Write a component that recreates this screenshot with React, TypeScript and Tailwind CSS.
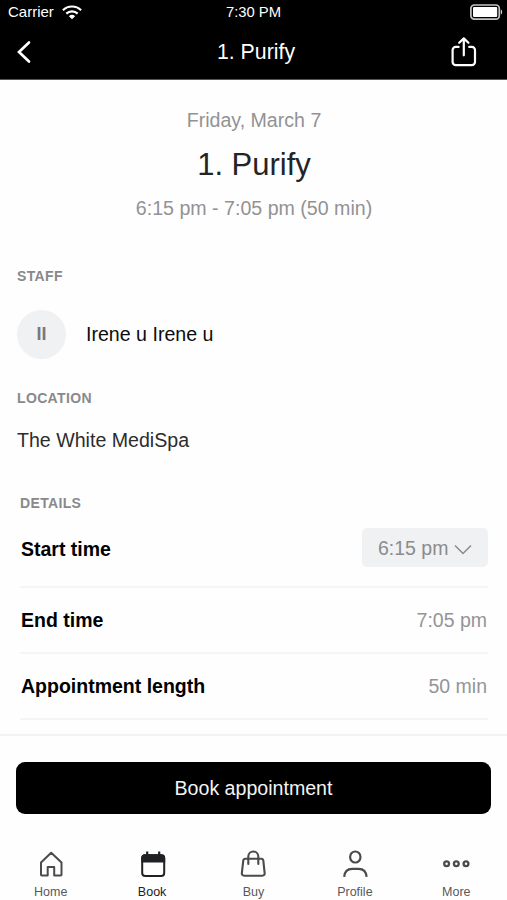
import React from "react";

const DETAILS = [
  { label: "End time", value: "7:05 pm" },
  { label: "Appointment length", value: "50 min" },
];

function WifiIcon() {
  return (
    <svg width="20" height="15" viewBox="0 0 20 15" fill="none" stroke="#fff" strokeWidth="2.2">
      <path d="M0.9 5.2a13 13 0 0 1 18.2 0" />
      <path d="M4.3 8.6a8.2 8.2 0 0 1 11.4 0" />
      <path d="M10 14.3 6.9 11.3a4.5 4.5 0 0 1 6.2 0z" fill="#fff" stroke="none" />
    </svg>
  );
}

function BatteryIcon() {
  return (
    <svg width="33" height="17" viewBox="0 0 33 17" fill="none">
      <rect x="0.9" y="1" width="28.4" height="14.2" rx="3.4" stroke="#c4c4c4" strokeWidth="1.7" />
      <rect x="3" y="3.1" width="24.2" height="10" rx="1" fill="#fff" />
      <path d="M30.8 5.6c1.8.6 1.8 4.4 0 5z" fill="#d4d4d4" />
    </svg>
  );
}

function ShareIcon() {
  return (
    <svg width="26" height="30" viewBox="0 0 26 30" fill="none" stroke="#fff" strokeWidth="2.2" strokeLinecap="round" strokeLinejoin="round">
      <path d="M7.6 9.9H4.8a3.2 3.2 0 0 0-3.2 3.2v11.9a3.2 3.2 0 0 0 3.2 3.2h16a3.2 3.2 0 0 0 3.2-3.2V13.1a3.2 3.2 0 0 0-3.2-3.2h-2.6" />
      <path d="M12.8 18.3V1.6M8.2 5.8l4.6-4.4 4.6 4.4" />
    </svg>
  );
}

const HomeIcon = () => (
  <svg width="28" height="28" viewBox="0 0 28 28" fill="none" stroke="#4b4b4d" strokeWidth="2" strokeLinejoin="round">
    <path d="M14.2 2.8 4 12.5v12.2q0 .8.8.8h5.9v-8.4h6.500v8.400h6.500q.8 0 .8-.8V12.500z" />
  </svg>
);

const BookIcon = () => (
  <svg width="28" height="28" viewBox="0 0 28 28" fill="none">
    <rect x="4.2" y="5.2" width="22" height="20.7" rx="3" stroke="#202124" strokeWidth="2" />
    <path d="M3.2 12.500V8q0-3.800 3.800-3.800h16.400q3.800 0 3.800 3.800v4.500z" fill="#202124" />
    <path d="M9.2 1.600v4M21.200 1.600v4" stroke="#202124" strokeWidth="2.2" />
  </svg>
);

const BuyIcon = () => (
  <svg width="28" height="28" viewBox="0 0 28 28" fill="none" stroke="#4b4b4d" strokeWidth="2.1" strokeLinecap="round">
    <path d="M6.300 8.700h16q1.700 0 2 1.800l1.300 12.200q.4 3-2.400 3H5.300q-2.800 0-2.400-3l1.400-12.200q.3-1.800 2-1.800z" />
    <path d="M9.300 14V6.500a5 5 0 0 1 10 0V14" />
  </svg>
);

const ProfileIcon = () => (
  <svg width="28" height="28" viewBox="0 0 28 28" fill="none" stroke="#4b4b4d" strokeWidth="2.2">
    <ellipse cx="14.3" cy="7" rx="5.2" ry="5.500" />
    <path d="M3.200 26.800q.6-8 8-8h6.400q7.400 0 8 8" />
  </svg>
);

const MoreIcon = () => (
  <svg width="28" height="28" viewBox="0 0 28 28" fill="none" stroke="#4b4b4d" strokeWidth="2.3">
    <circle cx="4.6" cy="13.800" r="2.4" />
    <circle cx="14.3" cy="13.800" r="2.4" />
    <circle cx="24" cy="13.800" r="2.4" />
  </svg>
);

const TABS = [
  { label: "Home", icon: <HomeIcon /> },
  { label: "Book", icon: <BookIcon />, active: true },
  { label: "Buy", icon: <BuyIcon /> },
  { label: "Profile", icon: <ProfileIcon /> },
  { label: "More", icon: <MoreIcon /> },
];

function SectionTitle({ children }: { children: React.ReactNode }) {
  return <h2 className="text-[14px] leading-5 font-bold tracking-[0.35px] text-[#89898b]">{children}</h2>;
}

export default function App() {
  return (
    <div className="flex h-[900px] w-[507px] flex-col overflow-hidden bg-[#fefefe] font-['Liberation_Sans',sans-serif]">
      <header className="h-20 shrink-0 border-b border-[#555] bg-black text-white">
        <div className="grid h-6 grid-cols-3 items-center pr-1 pl-2 text-[15px] leading-6">
          <div className="flex items-center gap-2">
            <span>Carrier</span>
            <WifiIcon />
          </div>
          <span className="pr-1 text-center text-[14.8px]">7:30 PM</span>
          <div className="flex justify-end"><BatteryIcon /></div>
        </div>
        <div className="grid h-[55px] grid-cols-3 items-center pr-[30px] pl-4">
          <button aria-label="Back">
            <svg width="16" height="24" viewBox="0 0 16 24" fill="none" stroke="#fff" strokeWidth="2.7" strokeLinecap="round">
              <path d="M13 2.5 3 12l10 9.5" />
            </svg>
          </button>
          <h1 className="pl-[19px] text-center text-[21.3px] leading-6">1. Purify</h1>
          <button aria-label="Share" className="flex justify-end"><ShareIcon /></button>
        </div>
      </header>

      <main className="h-[656px] shrink-0 border-b-2 border-[#f3f3f4] px-[17px]">
        <div className="flex flex-col items-center pt-7 pl-px text-[19.6px] leading-6 text-[#929294]">
          <p>Friday, March 7</p>
          <p className="mt-[13px] text-[31px] leading-10 text-[#242426]">1. Purify</p>
          <p className="mt-[11px]">6:15 pm - 7:05 pm (50 min)</p>
        </div>

        <section className="mt-[46px]">
          <SectionTitle>STAFF</SectionTitle>
          <div className="mt-6 flex items-center gap-5">
            <span className="flex size-[49px] items-center justify-center rounded-full bg-[#f0f1f3] text-[18px] font-bold text-[#77787c]">II</span>
            <span className="pb-px text-[19.6px] leading-6 text-[#0c0c0c]">Irene u Irene u</span>
          </div>
        </section>

        <section className="mt-[29px]">
          <SectionTitle>LOCATION</SectionTitle>
          <p className="mt-5 text-[19.6px] leading-6 text-[#2c2c2e]">The White MediSpa</p>
        </section>

        <section className="mt-[41px] pr-[2px] pl-[3px]">
          <SectionTitle>DETAILS</SectionTitle>
          <div className="mt-[15px] flex h-[60px] items-start justify-between border-b-2 border-[#f5f5f6]">
            <span className="pt-[9px] pl-px text-[19.5px] leading-6 font-bold">Start time</span>
            <button className="flex h-[39px] w-[126px] items-center rounded-[5px] bg-[#f0f1f3] pl-4 text-[19.5px] text-[#8a8b8e]">
              <span className="pt-0.5">6:15 pm</span>
              <svg className="mt-1 ml-1.5" width="18" height="12" viewBox="0 0 18 12" fill="none" stroke="#8a8b8e" strokeWidth="1.5">
                <path d="M1 1.5 9 9.500l8-8" />
              </svg>
            </button>
          </div>
          {DETAILS.map((row) => (
            <div key={row.label} className="flex h-[66px] items-center justify-between border-b-2 border-[#f5f5f6] pr-px pl-px text-[19.5px] leading-6">
              <span className="font-bold">{row.label}</span>
              <span className="text-[#949496]">{row.value}</span>
            </div>
          ))}
        </section>
      </main>

      <div className="shrink-0 px-4 pt-[26px]">
        <button className="h-[52px] w-full rounded-[9px] bg-black pt-0.5 text-[19.6px] text-[#f4f4f4]">Book appointment</button>
      </div>

      <nav className="mt-9 grid shrink-0 grid-cols-5">
        {TABS.map((tab) => (
          <div key={tab.label} className="flex flex-col items-center gap-1.5 text-[12.5px] leading-4">
            {tab.icon}
            <span className={tab.active ? "text-[#202124]" : "text-[#59595b]"}>{tab.label}</span>
          </div>
        ))}
      </nav>
    </div>
  );
}
